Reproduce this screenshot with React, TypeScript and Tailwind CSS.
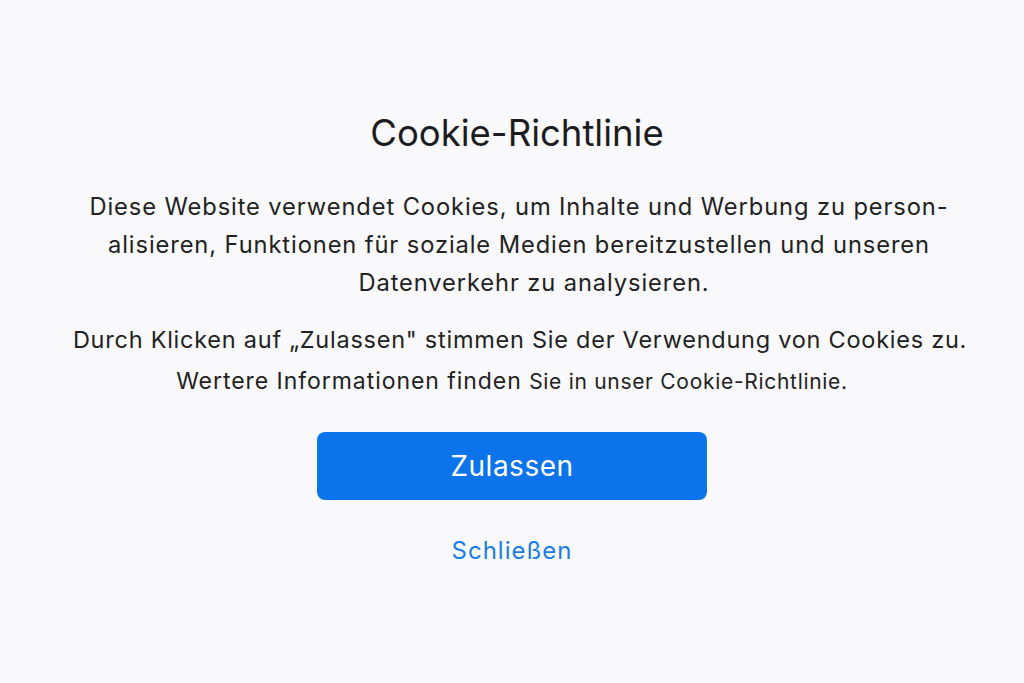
import React from 'react';

export default function App() {
  return (
    <div
      className="w-full h-[683px] bg-[#f9f9fb] flex flex-col items-center text-[#1c1c1e]"
      style={{ fontFamily: 'Inter, "Noto Sans", sans-serif' }}
    >
      <h1 className="mt-[111px] pl-[10px] text-[36.5px] leading-[44px] font-normal">Cookie-Richtlinie</h1>

      <div className="mt-[33px] pl-[14px] text-center text-[23.7px] leading-[38px] tracking-[0.9px] text-[#222]">
        <p>Diese Website verwendet Cookies, um Inhalte und Werbung zu person-</p>
        <p>alisieren, Funktionen für soziale Medien bereitzustellen und unseren</p>
        <p className="pl-[30px]">Datenverkehr zu analysieren.</p>
      </div>

      <p className="mt-[19px] pl-[16px] text-center text-[23.5px] leading-[38px] tracking-[0.75px] text-[#222]">
        Durch Klicken auf „Zulassen" stimmen Sie der Verwendung von Cookies zu.
      </p>
      <p className="mt-[4px] text-center text-[23px] leading-[36px] tracking-[0.95px] text-[#222]">
        Wertere Informationen finden{' '}
        <span className="text-[21px] tracking-[0.7px]">Sie in unser Cookie-Richtlinie.</span>
      </p>

      <button className="mt-[32px] w-[390px] h-[68px] rounded-[8px] bg-[#0b74eb] text-white text-[28px] leading-[32px] tracking-[0.5px]">
        Zulassen
      </button>

      <button className="mt-[35px] text-[24px] leading-[32px] tracking-[1px] text-[#1a7ee6]">Schließen</button>
    </div>
  );
}
